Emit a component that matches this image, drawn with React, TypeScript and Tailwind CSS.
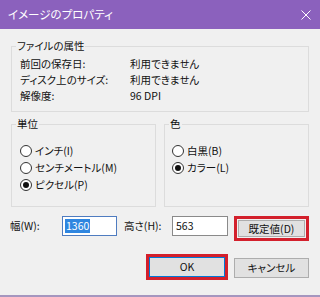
import React from 'react';

const font = '[font-family:"Noto_Sans_CJK_JP","Noto_Sans",sans-serif] [font-feature-settings:"palt"]';

function Radio({ checked, label }: { checked?: boolean; label: string }) {
  return (
    <div className="flex items-center gap-[3px] h-[17px]">
      <span className="w-[12px] h-[12px] rounded-full border border-[#333] bg-white flex items-center justify-center">
        {checked && <span className="w-[6px] h-[6px] rounded-full bg-[#111]" />}
      </span>
      <span className="leading-[17px]">{label}</span>
    </div>
  );
}

function Group({ title, children, className }: { title: string; children: React.ReactNode; className?: string }) {
  return (
    <fieldset className={`border border-[#dcdcdc] p-0 m-0 min-w-0 ${className ?? ''}`}>
      <legend className="ml-[4px] px-[1px] leading-[12px] h-[12px]">{title}</legend>
      {children}
    </fieldset>
  );
}

export default function App() {
  return (
    <div className={`w-[320px] h-[297px] bg-[#f0f0f0] flex flex-col text-[10.5px] text-[#111] border-b-2 border-[#a596bf] ${font}`}>
      {/* Title bar */}
      <div className="h-[29px] bg-[#8b61bd] flex items-center justify-between pl-[8px] pr-[8px] text-white text-[11.5px]">
        <span>イメージのプロパティ</span>
        <svg width="10" height="10" viewBox="0 0 10 10" className="mr-[1px]">
          <path d="M0.5 0.5 L9.5 9.5 M9.5 0.5 L0.5 9.5" stroke="white" strokeWidth="1" />
        </svg>
      </div>

      <div className="px-[11px] flex flex-col">
        {/* File attributes */}
        <Group title="ファイルの属性" className="mt-[11px]">
          <div className="pl-[8px] pt-[4px] pb-[7px]">
            {[
              ['前回の保存日:', '利用できません'],
              ['ディスク上のサイズ:', '利用できません'],
              ['解像度:', '96 DPI'],
            ].map(([k, v]) => (
              <div key={k} className="flex h-[16px] leading-[16px]">
                <span className="w-[110px]">{k}</span>
                <span>{v}</span>
              </div>
            ))}
          </div>
        </Group>

        {/* Unit / color */}
        <div className="grid grid-cols-2 gap-[8px] mt-[6px]">
          <Group title="単位">
            <div className="pl-[8px] pt-[12px] pb-[13px]">
              <Radio label="インチ(I)" />
              <Radio label="センチメートル(M)" />
              <Radio checked label="ピクセル(P)" />
            </div>
          </Group>
          <Group title="色">
            <div className="pl-[7px] pt-[12px]">
              <Radio label="白黒(B)" />
              <Radio checked label="カラー(L)" />
            </div>
          </Group>
        </div>

        {/* Size row */}
        <div className="flex items-start mt-[9px]">
          <span className="w-[52px] -ml-[1px] h-[20px] leading-[20px]">幅(W):</span>
          <div className="w-[55px] h-[20px] bg-white border border-[#4f7cc0] flex items-center pl-[2px]">
            <span className="bg-[#2f86e0] text-white leading-[14px] px-[1px]">1360</span>
          </div>
          <span className="w-[48px] ml-[7px] h-[20px] leading-[20px]">高さ(H):</span>
          <div className="w-[56px] h-[20px] bg-white border border-[#8a8a8a] flex items-center pl-[3px]">
            563
          </div>
          <div className="ml-[6px] w-[75px] h-[25px] border-[3px] border-[#d3202c] p-[1px] flex">
            <div className="flex-1 bg-[#e1e1e1] border border-[#adadad] flex items-center justify-center">
              既定値(D)
            </div>
          </div>
        </div>

        {/* Buttons */}
        <div className="flex justify-end items-center gap-[6px] mt-[13px]">
          <div className="w-[82px] h-[26px] border-[3px] border-[#d3202c] flex">
            <div className="flex-1 bg-[#e1e1e1] border border-[#0078d7] flex items-center justify-center">
              OK
            </div>
          </div>
          <div className="w-[75px] h-[20px] mt-[2px] bg-[#e1e1e1] border border-[#adadad] flex items-center justify-center">
            キャンセル
          </div>
        </div>
      </div>
    </div>
  );
}
